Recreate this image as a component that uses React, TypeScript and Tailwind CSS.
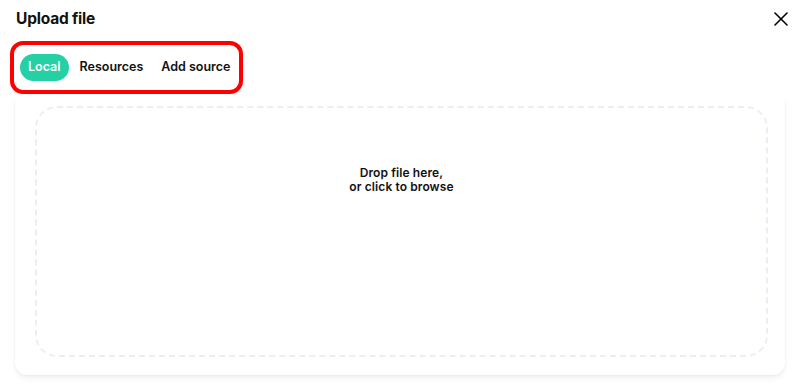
import { X } from "lucide-react";

const tabs = ["Local", "Resources", "Add source"];

export default function App() {
  return (
    <div className="w-[800px] h-[389px] bg-white overflow-hidden font-['Inter','Noto_Sans',sans-serif] text-[#111]">
      <div className="flex items-center justify-between pl-4 pr-[7px] pt-[8px] h-[30px]">
        <h1 className="text-[15.5px] font-bold tracking-[-0.2px]">Upload file</h1>
        <button className="text-black">
          <X size={24} strokeWidth={1.6} />
        </button>
      </div>

      <div className="ml-[10px] mt-[11px] w-[233px] h-[53px] border-[4px] border-[#ff0000] rounded-[13px] flex items-center pl-[6px]">
        {tabs.map((t, i) => (
          <div
            key={t}
            className={
              i === 0
                ? "h-[27px] px-[8px] rounded-full bg-[#25d0a4] text-white text-[12.5px] font-semibold flex items-center whitespace-nowrap"
                : i === 1
                  ? "ml-[11px] h-[27px] text-[12.5px] font-semibold flex items-center whitespace-nowrap"
                  : "ml-[18px] h-[27px] text-[12.5px] font-semibold flex items-center whitespace-nowrap"
            }
          >
            {t}
          </div>
        ))}
      </div>

      <div className="mx-[15px] mt-[2px] h-[279px] rounded-b-[12px] shadow-[0_4px_6px_-1px_rgba(0,0,0,0.06),-2px_2px_3px_-2px_rgba(0,0,0,0.05),2px_2px_3px_-2px_rgba(0,0,0,0.05)] pl-[20px] pr-[17px] pt-[10px] pb-[18px]">
        <div className="h-full border-2 border-dashed border-[#eceef5] rounded-[22px] flex flex-col items-center pt-[58px]">
          <p className="text-[12px] font-semibold leading-[14px] text-center tracking-[0.1px]">
            Drop file here,
            <br />
            or click to browse
          </p>
        </div>
      </div>
    </div>
  );
}
